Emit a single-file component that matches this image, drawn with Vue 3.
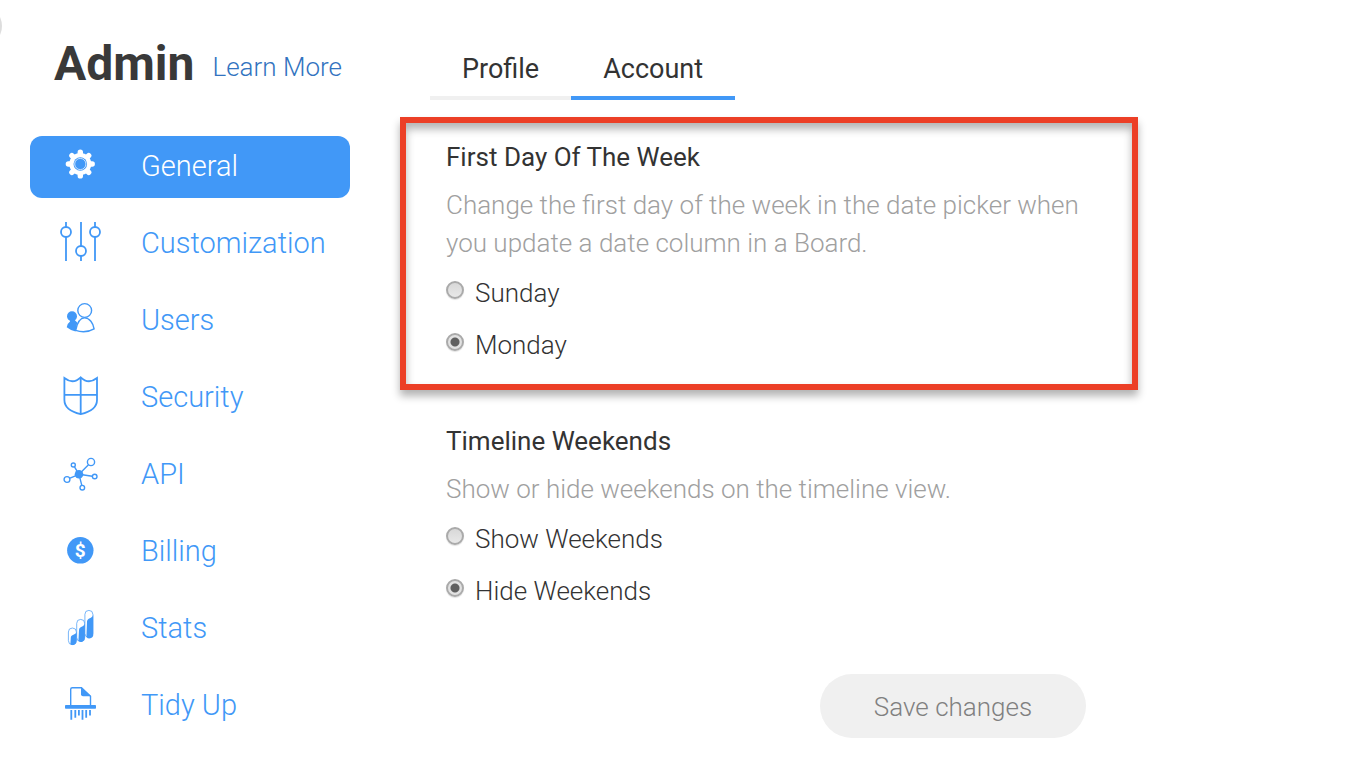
<script setup>
import { ref } from 'vue'

const navItems = ['General', 'Customization', 'Users', 'Security', 'API', 'Billing', 'Stats', 'Tidy Up']
const tabs = ['Profile', 'Account']
const activeNav = ref('General')
const activeTab = ref('Account')
const firstDay = ref('Monday')
const weekends = ref('Hide Weekends')
const gearTeeth = [0, 45, 90, 135, 180, 225, 270, 315]
</script>

<template>
  <div class="page">
    <button class="drawer-handle" type="button" aria-label="Collapse panel"></button>

    <aside class="sidebar">
      <header class="head">
        <h1>Admin</h1>
        <a href="#learn">Learn More</a>
      </header>
      <nav class="nav" aria-label="Admin sections">
        <a
          v-for="item in navItems"
          :key="item"
          href="#"
          class="nav-item"
          :class="{ active: item === activeNav }"
          @click.prevent="activeNav = item"
        >
          <svg class="icon" viewBox="0 0 44 48" aria-hidden="true">
            <g v-if="item === 'General'">
              <g stroke="currentColor" stroke-width="5.4" stroke-linecap="round">
                <line v-for="a in gearTeeth" :key="a" x1="22.3" y1="12" x2="22.3" y2="9.1" :transform="`rotate(${a} 22.3 21)`" />
              </g>
              <circle cx="22.3" cy="21" r="11" fill="currentColor" />
              <circle cx="22.3" cy="21" r="6.8" class="gear-hole" />
              <circle cx="22.3" cy="21" r="5.6" fill="none" stroke="currentColor" stroke-width="0.7" />
            </g>
            <g v-else-if="item === 'Customization'" class="line">
              <path d="M8 2V7M8 17V41M23 2V26M23 36V41M37 2V7M37 17V41" />
              <circle cx="8" cy="12" r="5" />
              <circle cx="23" cy="31" r="5" />
              <circle cx="37" cy="12" r="5" />
            </g>
            <g v-else-if="item === 'Users'">
              <g fill="currentColor">
                <circle cx="14" cy="19.3" r="5" />
                <path d="M11.8 22.5H16.2L19.2 25.5L17.6 34.4Q12.5 33.5 8.7 30.3Q9.2 26.4 12 24.4Z" />
              </g>
              <g class="line thin">
                <circle cx="26.7" cy="13.5" r="6.9" />
                <path d="M17.7 33.4C19 26.6 21.8 20.9 26.6 20.9C31.6 20.9 35.2 26.2 36.1 31.8Q27.4 36.8 17.7 33.4Z" />
              </g>
            </g>
            <g v-else-if="item === 'Security'" class="line">
              <path d="M6.4 4Q15 10.8 22.7 3.3Q30.4 10.8 39 4V26C39 33.2 32 38 22.7 40.2C13.4 38 6.4 33.2 6.4 26ZM22.7 3V40M6.4 20.8H39" />
            </g>
            <g v-else-if="item === 'API'">
              <g class="line thin">
                <path d="M21 23.3L30.5 13.8M21 23.3L16.5 15.8M21 23.3L12 27.2M21 23.3L34.3 25.3M21 23.3L23.8 34.3" />
                <circle cx="33" cy="11" r="3.6" />
                <circle cx="15.3" cy="14" r="2" />
                <circle cx="9" cy="28.5" r="2.9" />
                <circle cx="36.7" cy="25.5" r="2.3" />
                <circle cx="24.3" cy="36.7" r="2.3" />
              </g>
              <circle cx="21" cy="23.3" r="4.3" fill="currentColor" />
            </g>
            <g v-else-if="item === 'Billing'">
              <circle cx="22.3" cy="22.3" r="13.2" fill="currentColor" />
              <text x="22.3" y="29" class="dollar">$</text>
            </g>
            <g v-else-if="item === 'Stats'">
              <g class="pill">
                <rect x="10.4" y="23" width="8" height="16.6" rx="4" />
                <rect x="18.7" y="14.4" width="8" height="22" rx="4" />
                <rect x="26.9" y="5.4" width="8" height="27" rx="4" />
              </g>
              <g fill="currentColor">
                <path d="M12.8 32.4C13 29.6 17.6 29.8 18.6 27V35.6A3.9 4 0 0 1 12.4 39.2Z" />
                <path d="M21 25.2C21.2 21.4 26 22.2 26.9 18.6V32.6A3.9 4 0 0 1 20.4 36Z" />
                <path d="M29 16.6C29.2 12.8 34.2 13.8 35.2 10V28.6A3.9 4 0 0 1 28.4 32Z" />
              </g>
            </g>
            <g v-else>
              <path class="line thin" d="M12.7 23.5V7.3Q12.7 5.7 14.3 5.7H23.5L32.5 14.2V23.5" />
              <path fill="currentColor" d="M23 5.2L33.2 14.2H25Q23 14.2 23 12.2Z" />
              <rect x="7" y="23" width="31" height="3.8" rx="0.8" fill="currentColor" />
              <path class="line" d="M13.3 28V37.8M17.3 28V35.8M20.9 28V33.6M24.5 28V37.8M28.2 28V35.8M32 28V33.6" />
            </g>
          </svg>
          <span>{{ item }}</span>
        </a>
      </nav>
    </aside>

    <main class="main">
      <div class="tabs" role="tablist">
        <button
          v-for="t in tabs"
          :key="t"
          type="button"
          role="tab"
          class="tab"
          :class="{ selected: t === activeTab }"
          :aria-selected="t === activeTab"
          @click="activeTab = t"
        >{{ t }}</button>
      </div>

      <section class="group highlighted">
        <h2>First Day Of The Week</h2>
        <p>Change the first day of the week in the date picker when you update a date column in a Board.</p>
        <label v-for="d in ['Sunday', 'Monday']" :key="d" class="option">
          <input v-model="firstDay" type="radio" name="first-day" :value="d" />
          <span>{{ d }}</span>
        </label>
      </section>

      <section class="group">
        <h2>Timeline Weekends</h2>
        <p>Show or hide weekends on the timeline view.</p>
        <label v-for="w in ['Show Weekends', 'Hide Weekends']" :key="w" class="option">
          <input v-model="weekends" type="radio" name="weekends" :value="w" />
          <span>{{ w }}</span>
        </label>
      </section>

      <div class="actions">
        <button class="save" type="button">Save changes</button>
      </div>
    </main>
  </div>
</template>

<style>
body {
  margin: 0;
  background: #fff;
}
</style>

<style scoped>
.page {
  position: relative;
  display: flex;
  gap: 50px;
  padding: 30px;
  padding-bottom: 20px;
  overflow: hidden;
  box-sizing: border-box;
  font-family: Roboto, "Liberation Sans", sans-serif;
  font-weight: 300;
  font-size: 26px;
  color: #333;
}
.drawer-handle {
  position: absolute;
  left: -40px;
  top: 5px;
  width: 42px;
  height: 42px;
  padding: 0;
  border: 0;
  border-radius: 50%;
  background: #ddd;
}
.sidebar {
  flex: 0 0 320px;
}
.head {
  display: flex;
  align-items: flex-start;
  gap: 18px;
  height: 106px;
  padding-left: 24px;
  box-sizing: border-box;
  white-space: nowrap;
}
h1 {
  margin: 0;
  font-size: 48px;
  line-height: 67px;
  font-weight: 700;
  color: #393939;
}
.head a {
  line-height: 74px;
  color: #3273c0;
  text-decoration: none;
}
.nav {
  display: flex;
  flex-direction: column;
  gap: 15px;
}
.nav-item {
  display: flex;
  align-items: center;
  gap: 39px;
  height: 62px;
  padding-left: 28px;
  border-radius: 12px;
  box-sizing: border-box;
  font-size: 29px;
  line-height: 60px;
  color: #4198f7;
  text-decoration: none;
}
.nav-item span {
  padding-bottom: 2px;
}
.nav-item.active {
  background: #4198f7;
  color: #fff;
}
.icon {
  width: 44px;
  height: 48px;
  flex: none;
}
.gear-hole {
  fill: #4198f7;
}
.line {
  fill: none;
  stroke: currentColor;
  stroke-width: 1.8;
}
.thin {
  stroke-width: 1.4;
}
.pill {
  fill: #fff;
  stroke: currentColor;
  stroke-width: 0.7;
}
.dollar {
  fill: #fff;
  font-size: 19px;
  font-weight: 700;
  text-anchor: middle;
}
.main {
  flex: 0 1 738px;
  min-width: 0;
}
.tabs {
  display: flex;
  padding-left: 30px;
  margin-bottom: 17px;
}
.tab {
  height: 70px;
  padding: 12px 32px 0;
  border: 0;
  border-bottom: 4px solid #f0f0f0;
  background: none;
  font: inherit;
  font-size: 27px;
  font-weight: 400;
  color: #333;
}
.tab.selected {
  border-bottom-color: #4198f7;
}
.group {
  box-sizing: border-box;
  padding: 15px 40px 13px;
  border: 6px solid transparent;
}
.highlighted {
  border-color: #ec3f26;
  margin-bottom: 11px;
  box-shadow: 0 6px 8px rgba(0, 0, 0, 0.3), inset 0 6px 8px rgba(0, 0, 0, 0.3);
}
h2 {
  margin: 0 0 10px;
  font-size: 26px;
  line-height: 38px;
  font-weight: 400;
}
p {
  margin: 0 0 5px;
  line-height: 38px;
  color: #a0a0a0;
}
.option {
  display: flex;
  align-items: center;
  gap: 11px;
  line-height: 52px;
}
.option input {
  appearance: none;
  width: 18px;
  height: 18px;
  margin: 0 0 7px;
  border: 2px solid #aaa;
  border-radius: 50%;
  background: linear-gradient(#d8d8d8, #e8e8e8);
  box-shadow: 0 1px 1px rgba(0, 0, 0, 0.12);
}
.option input:checked {
  background: radial-gradient(circle, #606060 0 4px, #e2e2e2 5px);
}
.actions {
  display: flex;
  justify-content: flex-end;
  padding: 38px 52px 0 0;
}
.save {
  width: 266px;
  height: 64px;
  padding: 2px 0 0;
  border: 0;
  border-radius: 32px;
  background: #f0f0f0;
  font: inherit;
  color: #808080;
}
</style>
